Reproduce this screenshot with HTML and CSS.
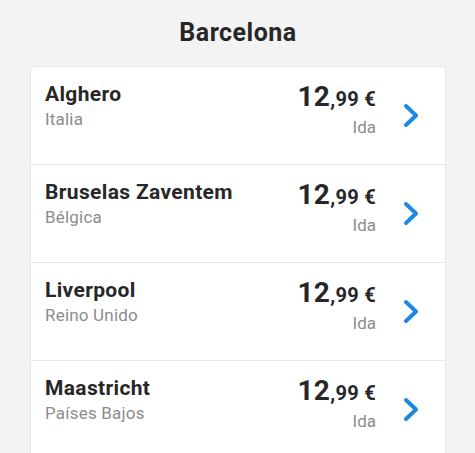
FILE: index.html
```html
<!DOCTYPE html>
<html lang="es">
<head>
    <meta charset="UTF-8">
    <meta name="viewport" content="width=device-width, initial-scale=1.0">
    <title>Barcelona</title>
    <link rel="stylesheet" href="styles.css">
</head>
<body>
    <h1 class="title">Barcelona</h1>

    <ul class="routes">
        <li class="route">
            <div class="place">
                <div class="city">Alghero</div>
                <div class="country">Italia</div>
            </div>
            <div class="fare">
                <div class="price">12<span class="cents">,99 €</span></div>
                <div class="kind">Ida</div>
            </div>
            <svg class="chevron" width="16" height="25" viewBox="0 0 16 25"><polyline points="3,3 13,12.5 3,22" /></svg>
        </li>
        <li class="route">
            <div class="place">
                <div class="city">Bruselas Zaventem</div>
                <div class="country">Bélgica</div>
            </div>
            <div class="fare">
                <div class="price">12<span class="cents">,99 €</span></div>
                <div class="kind">Ida</div>
            </div>
            <svg class="chevron" width="16" height="25" viewBox="0 0 16 25"><polyline points="3,3 13,12.5 3,22" /></svg>
        </li>
        <li class="route">
            <div class="place">
                <div class="city">Liverpool</div>
                <div class="country">Reino Unido</div>
            </div>
            <div class="fare">
                <div class="price">12<span class="cents">,99 €</span></div>
                <div class="kind">Ida</div>
            </div>
            <svg class="chevron" width="16" height="25" viewBox="0 0 16 25"><polyline points="3,3 13,12.5 3,22" /></svg>
        </li>
        <li class="route">
            <div class="place">
                <div class="city">Maastricht</div>
                <div class="country">Países Bajos</div>
            </div>
            <div class="fare">
                <div class="price">12<span class="cents">,99 €</span></div>
                <div class="kind">Ida</div>
            </div>
            <svg class="chevron" width="16" height="25" viewBox="0 0 16 25"><polyline points="3,3 13,12.5 3,22" /></svg>
        </li>
    </ul>
</body>
</html>
```

FILE: styles.css
```css
body {
    font-family: Roboto, "Liberation Sans", sans-serif;
    background-color: #f3f3f3;
    color: #272727;
    margin: 0;
    padding: 18px 29px 0 30px;
}

.title {
    margin: 0 0 18px;
    font-size: 25px;
    line-height: 30px;
    font-weight: 700;
    letter-spacing: 0.5px;
    text-align: center;
}

.routes {
    list-style: none;
    margin: 0;
    padding: 0;
    background: #fff;
    border: 1px solid #e6e6e6;
    border-radius: 5px;
}

.route {
    display: flex;
    align-items: flex-start;
    height: 98px;
    box-sizing: border-box;
    padding: 0 26px 0 14px;
    border-bottom: 1px solid #e8e8e8;
}

.place {
    flex: 1;
    padding-top: 14px;
}

.city {
    font-size: 21px;
    line-height: 26px;
    font-weight: 700;
    letter-spacing: 0.35px;
}

.country {
    margin-top: 1px;
    font-size: 17px;
    line-height: 22px;
    letter-spacing: 0.2px;
    color: #8c8c8c;
}

.fare {
    padding-top: 14px;
    text-align: right;
}

.price {
    font-size: 28px;
    line-height: 32px;
    font-weight: 700;
    letter-spacing: 0.3px;
}

.cents {
    font-size: 20px;
}

.kind {
    margin-top: 1px;
    font-size: 17px;
    line-height: 22px;
    color: #8c8c8c;
}

.chevron {
    align-self: center;
    margin-left: 27px;
    fill: none;
    stroke: #1e88e5;
    stroke-width: 4;
    stroke-linecap: round;
    stroke-linejoin: round;
}
```
